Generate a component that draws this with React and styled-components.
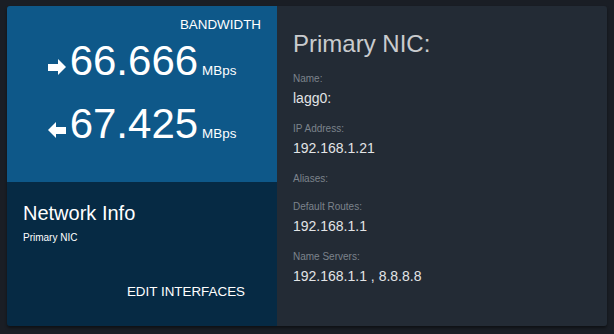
import React from 'react';
import styled, { createGlobalStyle } from 'styled-components';

const GlobalStyle = createGlobalStyle`
	html, body {
		margin: 0;
		padding: 0;
		background: #1a1e25;
		font-family: 'Liberation Sans', Arial, sans-serif;
	}
`;

const Page = styled.div`
	width: 614px;
	height: 334px;
	padding: 6px 7px;
	box-sizing: border-box;
`;

const Card = styled.div`
	display: flex;
	width: 600px;
	height: 320px;
	border-radius: 3px;
	overflow: hidden;
	box-shadow: 0 2px 3px rgba(0, 0, 0, 0.45);
`;

const Side = styled.div`
	display: flex;
	flex-direction: column;
	width: 270px;
	flex-shrink: 0;
`;

const Bandwidth = styled.div`
	height: 176px;
	box-sizing: border-box;
	padding: 11px 16px 0;
	background: #0e5889;
	color: #fff;
`;

const Caption = styled.div`
	text-align: right;
	font-size: 13.4px;
	line-height: 16px;
	margin-bottom: 4px;
`;

const Rate = styled.div`
	display: flex;
	justify-content: center;
	align-items: baseline;
	margin-bottom: 15px;
`;

const Arrow = styled.svg`
	width: 18px;
	height: 16px;
	margin-right: 4px;
	margin-bottom: 1px;
	fill: #fff;
`;

const Number = styled.span`
	font-size: 42px;
	line-height: 48px;
`;

const Unit = styled.span`
	font-size: 13.4px;
	margin-left: 4px;
`;

const Info = styled.div`
	flex: 1;
	display: flex;
	flex-direction: column;
	padding: 19px 16px 18px;
	background: #062a44;
	color: #fff;
`;

const InfoTitle = styled.div`
	font-size: 20px;
	line-height: 24px;
`;

const InfoSub = styled.div`
	margin-top: 6px;
	font-size: 10px;
	line-height: 14px;
`;

const EditButton = styled.button`
	align-self: flex-end;
	margin-top: auto;
	padding: 8px 16px;
	border: none;
	background: transparent;
	color: #fff;
	font-family: inherit;
	font-size: 13.4px;
	line-height: 16px;
	cursor: pointer;
`;

const Details = styled.div`
	flex: 1;
	padding: 24px 16px;
	background: #232b35;
`;

const Heading = styled.div`
	color: #c9cbce;
	font-size: 24px;
	line-height: 28px;
	margin-bottom: 14px;
`;

const Field = styled.div`
	margin-bottom: 14px;
`;

const Label = styled.div`
	color: #7c838c;
	font-size: 10px;
	line-height: 14px;
`;

const Value = styled.div`
	margin-top: 2px;
	color: #e2e4e6;
	font-size: 14px;
	line-height: 20px;
`;

const RightArrow = () => (
	<Arrow viewBox="0 0 18 16">
		<rect x="0" y="5" width="11" height="7" />
		<polygon points="10,0 18,8 10,16" />
	</Arrow>
);

const LeftArrow = () => (
	<Arrow viewBox="0 0 18 16">
		<rect x="7" y="5" width="11" height="7" />
		<polygon points="8,0 0,8 8,16" />
	</Arrow>
);

const fields = [
	{ label: 'Name:', value: 'lagg0:' },
	{ label: 'IP Address:', value: '192.168.1.21' },
	{ label: 'Aliases:', value: '' },
	{ label: 'Default Routes:', value: '192.168.1.1' },
	{ label: 'Name Servers:', value: '192.168.1.1 , 8.8.8.8' },
];

const App = () => (
	<>
		<GlobalStyle />
		<Page>
			<Card>
				<Side>
					<Bandwidth>
						<Caption>BANDWIDTH</Caption>
						<Rate>
							<RightArrow />
							<Number>66.666</Number>
							<Unit>MBps</Unit>
						</Rate>
						<Rate>
							<LeftArrow />
							<Number>67.425</Number>
							<Unit>MBps</Unit>
						</Rate>
					</Bandwidth>
					<Info>
						<InfoTitle>Network Info</InfoTitle>
						<InfoSub>Primary NIC</InfoSub>
						<EditButton>EDIT INTERFACES</EditButton>
					</Info>
				</Side>
				<Details>
					<Heading>Primary NIC:</Heading>
					{fields.map(f => (
						<Field key={f.label}>
							<Label>{f.label}</Label>
							<Value>{f.value}</Value>
						</Field>
					))}
				</Details>
			</Card>
		</Page>
	</>
);

export default App;
